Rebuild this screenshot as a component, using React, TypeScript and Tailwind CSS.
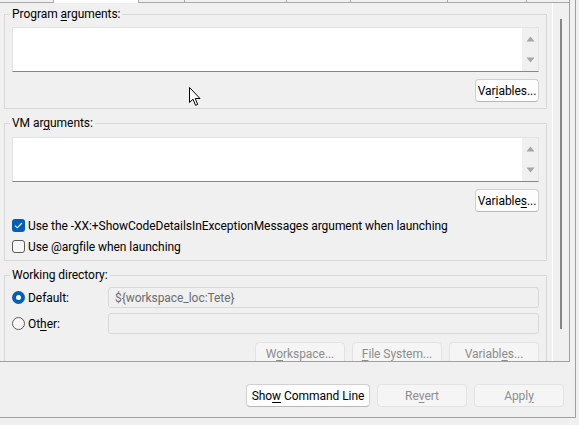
import React from "react";

function Btn({
  children,
  className,
  disabled,
}: {
  children: React.ReactNode;
  className: string;
  disabled?: boolean;
}) {
  return (
    <div
      className={
        "h-[23px] shrink-0 rounded-[4px] border flex items-center justify-center whitespace-pre " +
        (disabled
          ? "border-[#e3e3e3] bg-[#f5f5f5] text-[#8d8d8d] "
          : "border-[#d0d0d0] border-b-[#b8b8b8] bg-[#fdfdfd] text-black ") +
        className
      }
    >
      <span>{children}</span>
    </div>
  );
}

function U({ children }: { children: React.ReactNode }) {
  return <span className="underline underline-offset-[2px]">{children}</span>;
}

function TextBox({ className }: { className: string }) {
  return (
    <div
      className={
        "h-[45px] bg-white border border-[#e3e3e3] border-b-[#868686] flex justify-end " +
        className
      }
    >
      <div className="w-[16px] bg-[#f0f0f0] flex flex-col items-center justify-between py-[8px]">
        <svg width="9" height="6" viewBox="0 0 9 6">
          <path d="M4.5 0.5 L8.5 5.5 L0.5 5.5 Z" fill="#a6a6a6" />
        </svg>
        <svg width="9" height="6" viewBox="0 0 9 6">
          <path d="M0.5 0.5 L8.5 0.5 L4.5 5.5 Z" fill="#a6a6a6" />
        </svg>
      </div>
    </div>
  );
}

function Check({ checked }: { checked?: boolean }) {
  return checked ? (
    <div className="w-[13px] h-[13px] rounded-[3px] bg-[#005fb8] flex items-center justify-center shrink-0">
      <svg width="9" height="7" viewBox="0 0 9 7">
        <path d="M1 3.6 L3.3 5.8 L8 1" fill="none" stroke="white" strokeWidth="1.1" />
      </svg>
    </div>
  ) : (
    <div className="w-[13px] h-[13px] rounded-[3px] border border-[#5c5c5c] bg-[#f7f7f7] shrink-0" />
  );
}

function Radio({ checked }: { checked?: boolean }) {
  return checked ? (
    <div className="w-[13px] h-[13px] rounded-full bg-[#005fb8] flex items-center justify-center shrink-0">
      <div className="w-[5px] h-[5px] rounded-full bg-white" />
    </div>
  ) : (
    <div className="w-[13px] h-[13px] rounded-full border border-[#5c5c5c] bg-[#f7f7f7] shrink-0" />
  );
}

function Group({
  title,
  children,
  className,
}: {
  title: React.ReactNode;
  children: React.ReactNode;
  className: string;
}) {
  return (
    <fieldset className={"border border-[#d9d9d9] px-[7px] " + className}>
      <legend className="-ml-[2px] px-[2px] h-[16px] leading-[16px]">{title}</legend>
      {children}
    </fieldset>
  );
}

export default function App() {
  return (
    <div className="w-[579px] h-[425px] bg-[#f0f0f0] overflow-hidden relative text-[12px] text-black font-['Roboto',sans-serif] tracking-[-0.05px]">
      <div className="w-[576px] h-[418px] border-r border-b border-[#a0a0a0] flex flex-col">
        {/* tab folder */}
        <div className="w-[570px] h-[362px] shrink-0 border-r border-b border-[#a0a0a0] flex flex-col overflow-hidden">
          {/* tab strip */}
          <div className="flex h-[3px] shrink-0">
            <div className="w-[54px] border-r border-b border-[#a9a9a9]" />
            <div className="w-[85px] border-r border-[#a9a9a9] bg-white" />
            <div className="w-[46px] border-r border-b border-[#a9a9a9]" />
            <div className="w-[102px] border-r border-b border-[#a9a9a9]" />
            <div className="w-[64px] border-r border-b border-[#a9a9a9]" />
            <div className="w-[97px] border-r border-b border-[#a9a9a9]" />
            <div className="w-[79px] border-r border-b border-[#a9a9a9]" />
            <div className="flex-1 border-b border-[#a9a9a9]" />
          </div>
          <div className="flex flex-1 min-h-0">
            <div className="w-[552px] shrink-0 overflow-hidden pl-[4px] pr-[5px] pt-[3px]">
              <Group
                className="pb-[6px]"
                title={
                  <>
                    Program <U>a</U>rguments:
                  </>
                }
              >
                <TextBox className="mt-[5px]" />
                <div className="flex justify-end mt-[7px]">
                  <Btn className="w-[64px]">
                    Var<U>i</U>ables...
                  </Btn>
                </div>
              </Group>
              <Group
                className="mt-[6px] pb-[5px]"
                title={
                  <>
                    VM ar<U>g</U>uments:
                  </>
                }
              >
                <TextBox className="mt-[6px]" />
                <div className="flex justify-end mt-[7px]">
                  <Btn className="w-[64px]">
                    Variable<U>s</U>...
                  </Btn>
                </div>
                <div className="mt-[5px] h-[17px] flex items-center gap-[3px]">
                  <Check checked />
                  <span className="whitespace-nowrap">
                    Use the -XX:+ShowCodeDetailsInExceptionMessages argument when launching
                  </span>
                </div>
                <div className="mt-[4px] h-[17px] flex items-center gap-[3px]">
                  <Check />
                  <span className="whitespace-nowrap">Use @argfile when launching</span>
                </div>
              </Group>
              <Group className="mt-[6px] pb-[20px]" title="Working directory:">
                <div className="mt-[4px] flex items-center h-[21px]">
                  <div className="w-[96px] shrink-0 flex items-center gap-[3px]">
                    <Radio checked />
                    <span>Default:</span>
                  </div>
                  <div className="flex-1 h-[21px] rounded-[3px] border border-[#d9d9d9] bg-[#f0f0f0] text-[#6d6d6d] flex items-center pl-[6px]">
                    {"${workspace_loc:Tete}"}
                  </div>
                </div>
                <div className="mt-[5px] flex items-center h-[21px]">
                  <div className="w-[96px] shrink-0 flex items-center gap-[3px]">
                    <Radio />
                    <span>
                      Ot<U>h</U>er:
                    </span>
                  </div>
                  <div className="flex-1 h-[21px] rounded-[3px] border border-[#d9d9d9] bg-[#f0f0f0]" />
                </div>
                <div className="mt-[8px] flex justify-end gap-[7px]">
                  <Btn disabled className="w-[90px]">
                    W<U>o</U>rkspace...
                  </Btn>
                  <Btn disabled className="w-[90px]">
                    <U>F</U>ile System...
                  </Btn>
                  <Btn disabled className="w-[90px]">
                    Variabl<U>e</U>s...
                  </Btn>
                </div>
              </Group>
            </div>
            <div className="w-px bg-white shrink-0" />
            <div className="flex-1 pl-[7px] pt-[16px]">
              <div className="w-[2px] h-[310px] bg-[#858585]" />
            </div>
          </div>
        </div>
        {/* bottom buttons */}
        <div className="flex justify-end gap-[7px] pr-[11px] pt-[22px]">
          <Btn className="w-[124px]">
            Sho<U>w</U> Command Line
          </Btn>
          <Btn disabled className="w-[90px]">
            Re<U>v</U>ert
          </Btn>
          <Btn disabled className="w-[90px]">
            Appl<U>y</U>
          </Btn>
        </div>
      </div>
      {/* mouse pointer */}
      <svg
        className="absolute left-[189px] top-[87px]"
        width="13"
        height="20"
        viewBox="0 0 13 20"
      >
        <path
          d="M0.5 0.5 L0.5 15.5 L4 12.2 L6.6 18.3 L8.7 17.4 L6.2 11.5 L11 11.5 Z"
          fill="white"
          stroke="black"
          strokeWidth="1"
          strokeLinejoin="miter"
        />
      </svg>
    </div>
  );
}
